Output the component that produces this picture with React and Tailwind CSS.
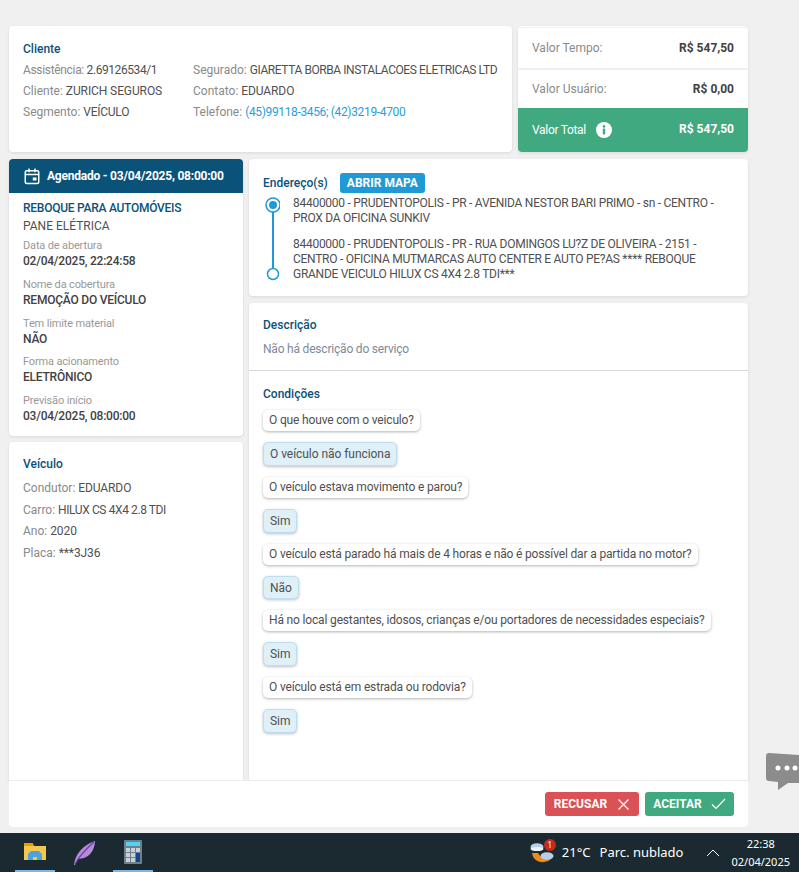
import React from "react";

const F = { fontFamily: 'Roboto, "Noto Sans", sans-serif' };
const T = { fontFamily: '"Noto Sans", sans-serif' };

function Line({ label, value, children, h = "h-[21px] leading-[23px]", labelTr = "", tr = "tracking-[-0.1px]" }) {
  return (
    <div className={h + " whitespace-nowrap"}>
      <span className={"text-[#8a8a8a] " + labelTr}>{label} </span>
      {value && <span className={"text-[#505050] " + tr}>{value}</span>}
      {children}
    </div>
  );
}

function Field({ label, value, gap = "mt-[9px]" }) {
  return (
    <div className={gap}>
      <div className="text-[11px] leading-[14px] text-[#999999] tracking-[-0.15px]">{label}</div>
      <div className="mt-[1px] text-[12px] leading-[15px] font-medium text-[#424242] tracking-[-0.22px]">{value}</div>
    </div>
  );
}

function Q({ children }) {
  return (
    <div className="self-start h-[21px] px-[6px] leading-[21px] text-[12px] tracking-[-0.16px] text-[#505050] bg-white rounded-[5px] shadow-[0_1px_3px_rgba(0,0,0,0.3)] whitespace-nowrap">
      {children}
    </div>
  );
}

function A({ children }) {
  return (
    <div className="self-start h-[23.8px] px-[6px] leading-[22px] text-[12px] tracking-[-0.05px] text-[#505050] bg-[#dff0f8] border border-[#bcdfef] rounded-[5px] shadow-[0_1px_3px_rgba(0,0,0,0.25)] whitespace-nowrap">
      {children}
    </div>
  );
}

export default function App() {
  return (
    <div className="relative h-[872px] w-[799px] overflow-hidden bg-[#f0f0f0] flex flex-col text-[12px]" style={F}>
      <div className="flex-1 min-h-0 flex flex-col pl-[9px] pr-[51px] pt-[26px] pb-[6px]">
        <div className="flex gap-[6px] h-[126px] shrink-0">
          <div className="w-[503px] bg-white rounded-[4px] shadow-[0_1px_3px_rgba(0,0,0,0.1)] pl-[14px] pt-[14px] flex">
            <div className="w-[170px] shrink-0">
              <div className="text-[12px] leading-[18px] font-medium text-[#0b5279] mb-[1px]">Cliente</div>
              <Line label="Assistência:" labelTr="tracking-[-0.33px]" tr="tracking-[-0.42px]" value="2.69126534/1" />
              <Line label="Cliente:" value="ZURICH SEGUROS" />
              <Line label="Segmento:" value="VEÍCULO" tr="tracking-[-0.25px]" />
            </div>
            <div className="pt-[19px]">
              <Line label="Segurado:" tr="tracking-[-0.42px]" value="GIARETTA BORBA INSTALACOES ELETRICAS LTD" />
              <Line label="Contato:" value="EDUARDO" />
              <Line label="Telefone:"><span className="text-[#2d9cdb] tracking-[-0.35px]">(45)99118-3456; (42)3219-4700</span></Line>
            </div>
          </div>
          <div className="w-[230px] rounded-[4px] overflow-hidden shadow-[0_1px_3px_rgba(0,0,0,0.1)] flex flex-col bg-white">
            <div className="h-[41px] mt-[1px] border-t border-[#f0f0f0] flex items-center justify-between px-[14px]">
              <span className="text-[#8a8a8a]">Valor Tempo:</span>
              <span className="font-bold text-[#424242]">R$ 547,50</span>
            </div>
            <div className="h-[40px] border-t-2 border-[#f0f0f0] flex items-center justify-between px-[14px]">
              <span className="text-[#8a8a8a]">Valor Usuário:</span>
              <span className="font-bold text-[#424242]">R$ 0,00</span>
            </div>
            <div className="flex-1 bg-[#40a97f] flex items-center justify-between px-[14px] text-white">
              <span className="flex items-center gap-[7px] tracking-[-0.3px]">
                Valor Total
                <svg className="ml-[3px]" width="16" height="16" viewBox="0 0 16 16">
                  <circle cx="8" cy="8" r="8" fill="#fff" />
                  <circle cx="8" cy="4.4" r="1.3" fill="#40a97f" />
                  <rect x="6.8" y="6.6" width="2.4" height="6" rx="0.6" fill="#40a97f" />
                </svg>
              </span>
              <span className="font-bold mb-[3px]">R$ 547,50</span>
            </div>
          </div>
        </div>

        <div className="flex gap-[6px] mt-[7px] flex-1 min-h-0">
          <div className="w-[234px] flex flex-col gap-[6px]">
            <div className="bg-white rounded-[4px] shadow-[0_1px_3px_rgba(0,0,0,0.1)] h-[277px] overflow-hidden">
              <div className="h-[34px] bg-[#0b5279] flex items-center pl-[14px] gap-[6px] text-white font-bold">
                <svg width="18" height="18" viewBox="0 0 24 24" fill="none" stroke="#fff" strokeWidth="2">
                  <rect x="3" y="5" width="18" height="17" rx="2" />
                  <path d="M3 10h18M8 2v5M16 2v5" />
                  <rect x="13" y="14" width="5" height="4" fill="#fff" stroke="none" />
                </svg>
                <span className="text-[12px] tracking-[-0.22px]">Agendado - 03/04/2025, 08:00:00</span>
              </div>
              <div className="pl-[14px] pt-[6px]">
                <div className="leading-[18px] font-medium text-[#0b5279] tracking-[-0.26px]">REBOQUE PARA AUTOMÓVEIS</div>
                <div className="leading-[18px] text-[#505050]">PANE ELÉTRICA</div>
                <Field label="Data de abertura" value="02/04/2025, 22:24:58" gap="mt-[4px]" />
                <Field label="Nome da cobertura" value="REMOÇÃO DO VEÍCULO" />
                <Field label="Tem limite material" value="NÃO" />
                <Field label="Forma acionamento" value="ELETRÔNICO" gap="mt-[8px]" />
                <Field label="Previsão início" value="03/04/2025, 08:00:00" />
              </div>
            </div>
            <div className="flex-1 bg-white rounded-t-[4px] shadow-[0_1px_3px_rgba(0,0,0,0.1)] pl-[14px] pt-[13px]">
              <div className="leading-[18px] font-medium text-[#0b5279] mb-[5px]">Veículo</div>
              <Line h="h-[21.6px] leading-[21px]" label="Condutor:" value="EDUARDO" />
              <Line h="h-[21.6px] leading-[21px]" label="Carro:" value="HILUX CS 4X4 2.8 TDI" tr="tracking-[-0.4px]" />
              <Line h="h-[21.6px] leading-[21px]" label="Ano:" value="2020" />
              <Line h="h-[21.6px] leading-[21px]" label="Placa:" value="***3J36" />
            </div>
          </div>

          <div className="w-[499px] flex flex-col gap-[7px]">
            <div className="h-[137px] shrink-0 bg-white rounded-[4px] shadow-[0_1px_3px_rgba(0,0,0,0.1)] pl-[14px] pt-[14px]">
              <div className="flex items-center gap-[12px] h-[20px]">
                <span className="font-medium text-[#0b5279]">Endereço(s)</span>
                <span className="bg-[#1f9ad6] text-white font-bold rounded-[3px] h-[20px] leading-[20px] px-[7px]">ABRIR MAPA</span>
              </div>
              <div className="flex mt-[3px]">
                <div className="w-[30px] shrink-0 pl-[1px] pt-[1px]">
                  <svg width="16" height="84" viewBox="0 0 16 84" fill="none">
                    <line x1="9" y1="12" x2="9" y2="72" stroke="#1f9ad6" strokeWidth="2" />
                    <circle cx="9" cy="8" r="7" fill="#fff" stroke="#1f9ad6" strokeWidth="1.5" />
                    <circle cx="9" cy="8" r="4" fill="#1f9ad6" />
                    <circle cx="9" cy="77" r="5.5" fill="#fff" stroke="#1f9ad6" strokeWidth="1.5" />
                  </svg>
                </div>
                <div className="w-[430px] leading-[15px] text-[#505050] tracking-[-0.27px]">
                  <div>84400000 - PRUDENTOPOLIS - PR - AVENIDA NESTOR BARI PRIMO - sn - CENTRO - PROX DA OFICINA SUNKIV</div>
                  <div className="mt-[11px]">84400000 - PRUDENTOPOLIS - PR - RUA DOMINGOS LU?Z DE OLIVEIRA - 2151 - CENTRO - OFICINA MUTMARCAS AUTO CENTER E AUTO PE?AS **** REBOQUE GRANDE VEICULO HILUX CS 4X4 2.8 TDI***</div>
                </div>
              </div>
            </div>
            <div className="flex-1 min-h-0 bg-white rounded-t-[4px] shadow-[0_1px_3px_rgba(0,0,0,0.1)]">
              <div className="h-[68px] border-b border-[#d4d8dd] pl-[14px] pt-[13px]">
                <div className="leading-[18px] font-medium text-[#0b5279]">Descrição</div>
                <div className="mt-[6px] leading-[18px] text-[#7d8a99] tracking-[-0.2px]">Não há descrição do serviço</div>
              </div>
              <div className="pl-[14px] pt-[14px] flex flex-col">
                <div className="leading-[18px] font-medium text-[#0b5279] mb-[7px]">Condições</div>
                <div className="flex flex-col gap-[11px]">
                  <Q>O que houve com o veiculo?</Q>
                  <A>O veículo não funciona</A>
                  <Q>O veículo estava movimento e parou?</Q>
                  <A>Sim</A>
                  <Q>O veículo está parado há mais de 4 horas e não é possível dar a partida no motor?</Q>
                  <A>Não</A>
                  <Q>Há no local gestantes, idosos, crianças e/ou portadores de necessidades especiais?</Q>
                  <A>Sim</A>
                  <Q>O veículo está em estrada ou rodovia?</Q>
                  <A>Sim</A>
                </div>
              </div>
            </div>
          </div>
        </div>

        <div className="relative z-10 h-[47px] shrink-0 bg-white rounded-b-[4px] border-t border-[#ececec] flex items-center justify-end gap-[6px] pr-[14px] text-white font-bold">
          <div className="h-[24px] w-[94px] bg-[#d95356] rounded-[3px] flex items-center justify-center gap-[10px]">
            RECUSAR
            <svg width="13" height="13" viewBox="0 0 13 13" stroke="#fff" strokeWidth="1.2"><path d="M1.5 1.5l10 10M11.5 1.5l-10 10" /></svg>
          </div>
          <div className="h-[24px] w-[89px] bg-[#40a97f] rounded-[3px] flex items-center justify-center gap-[9px]">
            ACEITAR
            <svg width="15" height="12" viewBox="0 0 15 12" fill="none" stroke="#fff" strokeWidth="1.2"><path d="M1 6.5l4 4L14 1" /></svg>
          </div>
        </div>
      </div>

      <div className="h-[39px] shrink-0 bg-[#1b2a30] relative flex items-center text-white" style={T}>
        <div className="flex h-full pl-[15px]">
          <div className="w-[40px] h-full flex items-center justify-center border-b-2 border-[#7fb8e0]">
            <svg width="22" height="20" viewBox="0 0 22 20">
              <path d="M0 2h9l1 2h12v14H0z" fill="#f3c64f" />
              <path d="M0 1h9v3H0z" fill="#e0a000" />
              <path d="M4 18v-6l3-3h8l3 3v6h-5v-3H9v3z" fill="#4aa3df" />
              <rect x="9" y="15" width="4" height="3" fill="#f3c64f" />
            </svg>
          </div>
          <div className="w-[58px] h-full flex items-center justify-center">
            <svg width="24" height="26" viewBox="0 0 24 26">
              <path d="M2 25C3 14 11 5 23 1c0 9-6 18-17 18l-3 6z" fill="#b68ad8" />
              <path d="M3 24C8 15 14 9 22 2" stroke="#6b3ea8" strokeWidth="1.2" fill="none" />
            </svg>
          </div>
          <div className="w-[40px] h-full flex items-center justify-center border-b-2 border-[#7fb8e0]">
            <svg width="18" height="24" viewBox="0 0 18 24">
              <rect width="18" height="24" rx="1" fill="#6f7f8c" />
              <rect x="2" y="2" width="14" height="4" fill="#4fd3f5" />
              <g fill="#c9d1d8">
                <rect x="2" y="8" width="4" height="4" /><rect x="7" y="8" width="4" height="4" /><rect x="12" y="8" width="4" height="4" />
                <rect x="2" y="13" width="4" height="4" /><rect x="7" y="13" width="4" height="4" />
                <rect x="2" y="18" width="4" height="4" /><rect x="7" y="18" width="4" height="4" />
              </g>
              <rect x="12" y="13" width="4" height="9" fill="#12488a" />
            </svg>
          </div>
        </div>
        <div className="ml-auto flex items-center">
          <div className="relative w-[24px] h-[24px] mr-[8px]">
            <svg width="24" height="24" viewBox="0 0 24 24">
              <path d="M2 12c1 8 9 11 16 8 1-.5 2-1 3-2-6 1-10-1-13-6z" fill="#f08a1d" />
              <ellipse cx="7" cy="6" rx="6.5" ry="3.8" fill="#b9cfe8" />
              <ellipse cx="7" cy="8" rx="6.5" ry="2" fill="#eef3f9" />
              <ellipse cx="17" cy="15" rx="6.5" ry="3.8" fill="#b9cfe8" />
            </svg>
            <span className="absolute top-[-2px] right-[-2px] w-[12px] h-[12px] rounded-full bg-[#c42b1c] text-[8px] leading-[12px] text-center">1</span>
          </div>
          <span className="text-[13px] mr-[9px]">21°C</span>
          <span className="text-[13px] mr-[23px]">Parc. nublado</span>
          <svg className="mr-[11px]" width="14" height="8" viewBox="0 0 14 8" fill="none" stroke="#fff" strokeWidth="1"><path d="M1 7l6-6 6 6" /></svg>
          <div className="text-[11px] leading-[18px] text-center mr-[9px]">
            <div>22:38</div>
            <div>02/04/2025</div>
          </div>
        </div>
      </div>

      <div className="absolute left-[766px] top-[753px]">
        <svg width="33" height="38" viewBox="0 0 33 38">
          <path d="M3 0l30 2v28H22l-10 7v-8l-9-1a3 3 0 0 1-3-3V3a3 3 0 0 1 3-3z" fill="#8c8c8c" />
          <circle cx="12" cy="15" r="2.5" fill="#fff" /><circle cx="21" cy="15" r="2.5" fill="#fff" /><circle cx="29" cy="15" r="2.5" fill="#fff" />
        </svg>
      </div>
    </div>
  );
}
